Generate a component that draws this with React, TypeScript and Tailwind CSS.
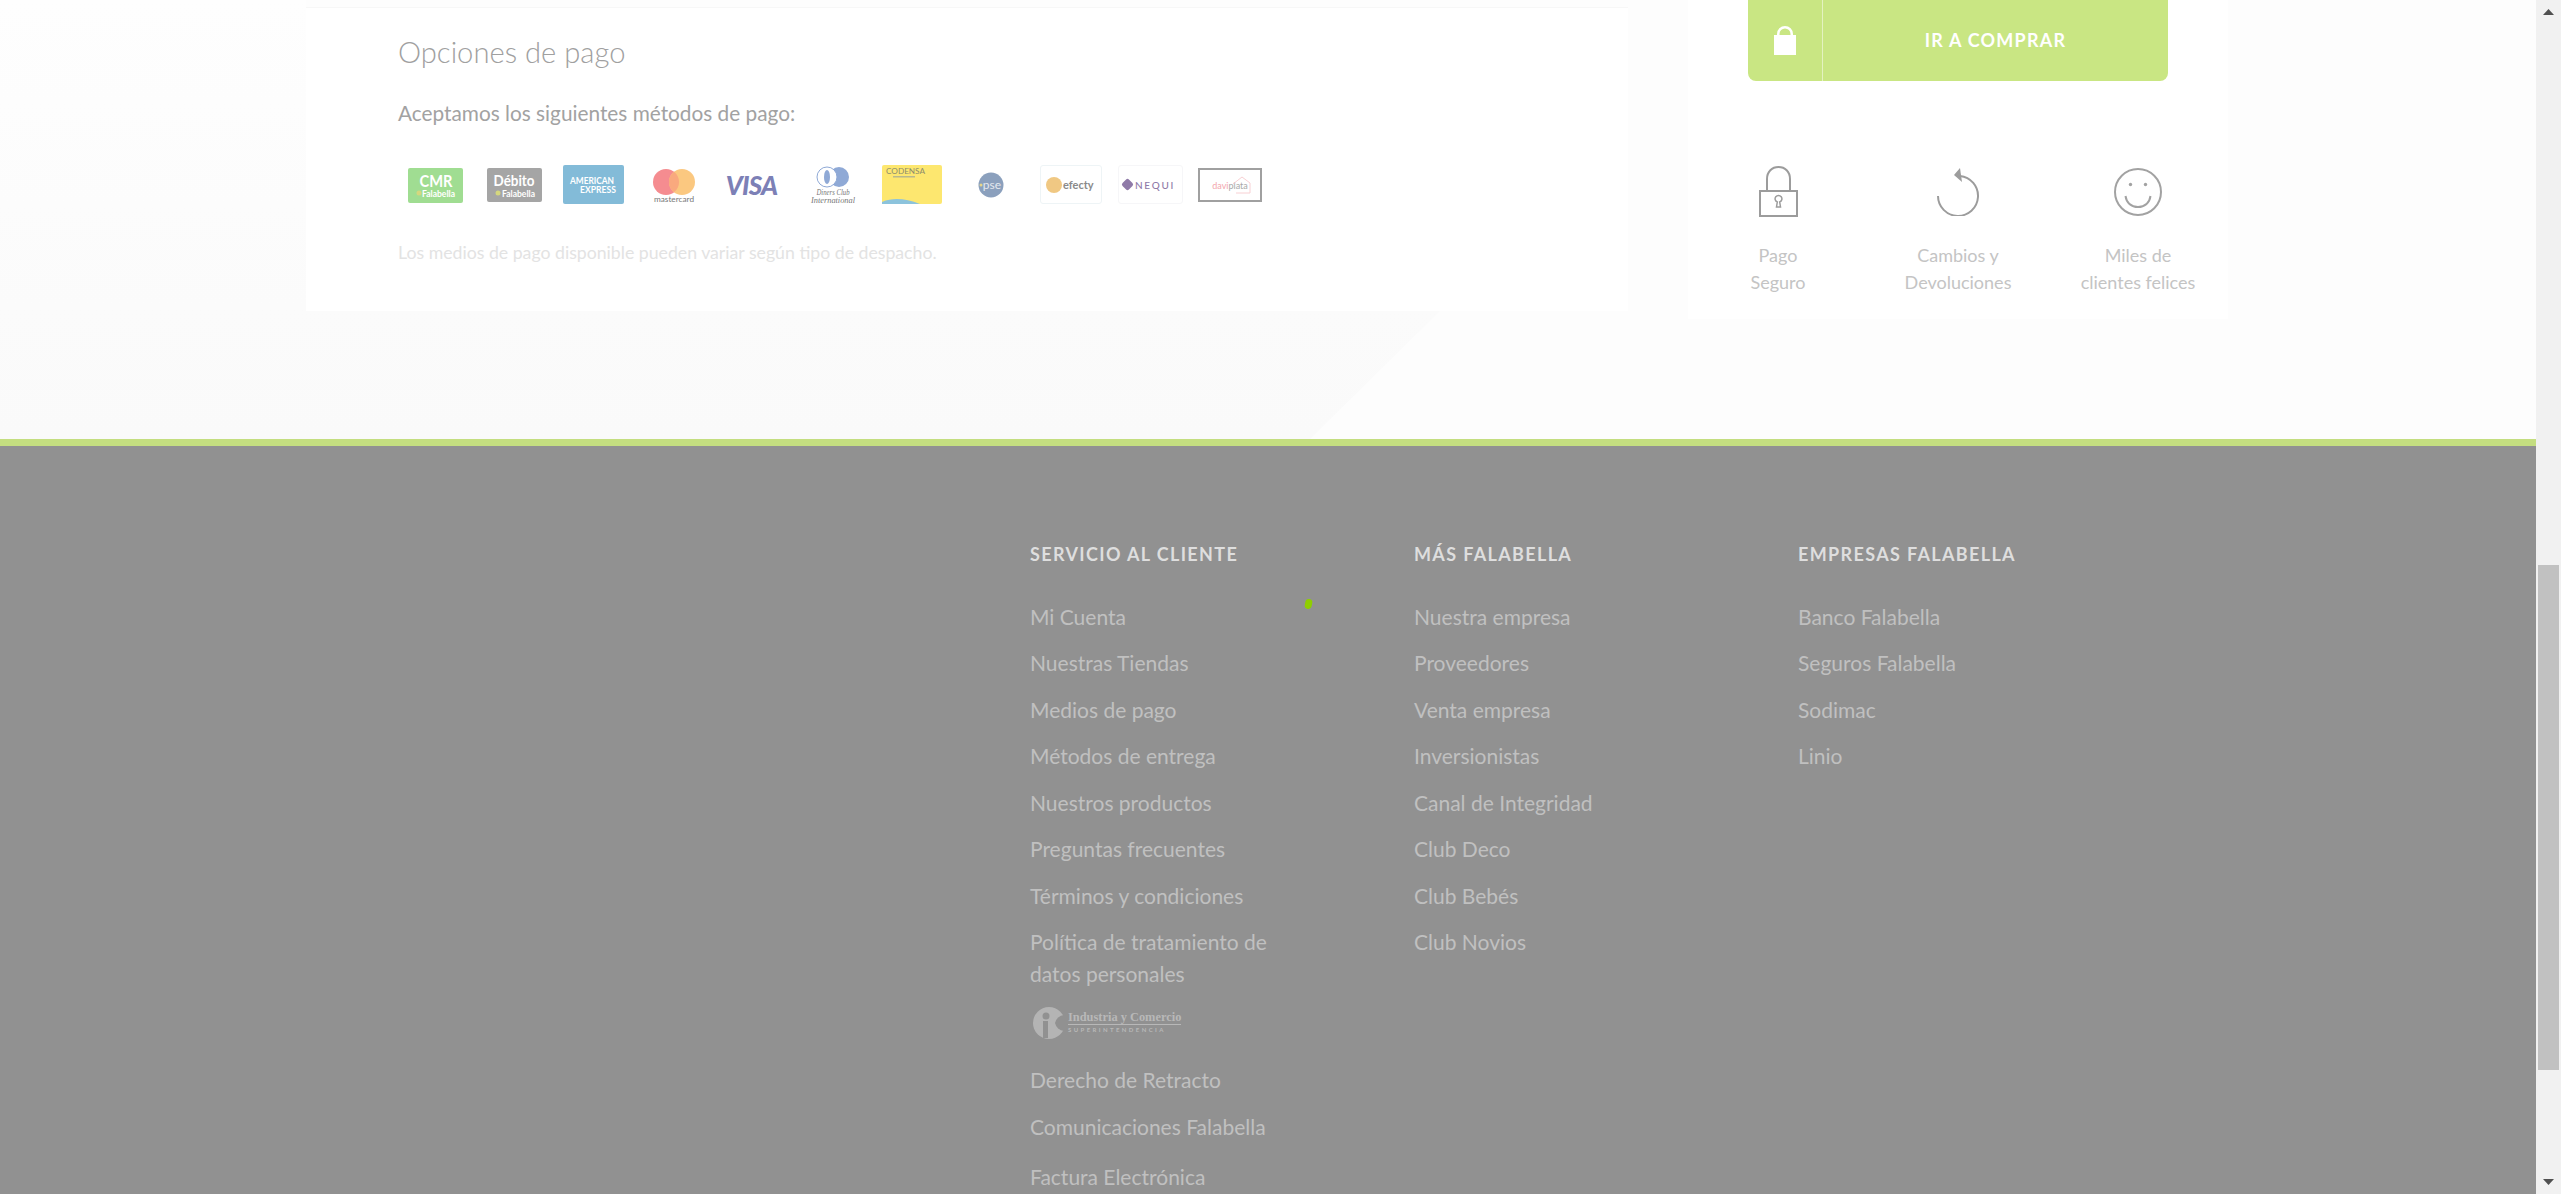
import React from 'react';

const servicio = ['Mi Cuenta', 'Nuestras Tiendas', 'Medios de pago', 'Métodos de entrega', 'Nuestros productos', 'Preguntas frecuentes', 'Términos y condiciones'];
const mas = ['Nuestra empresa', 'Proveedores', 'Venta empresa', 'Inversionistas', 'Canal de Integridad', 'Club Deco', 'Club Bebés', 'Club Novios'];
const empresas = ['Banco Falabella', 'Seguros Falabella', 'Sodimac', 'Linio'];

const linkClass = 'block text-[21px] leading-[32px] text-[#c0c0c0]';
const headClass = 'text-[18px] leading-[28px] font-bold tracking-[1.35px] text-[#dedede] mb-[32.5px]';

const FooterList = ({ title, links }: { title: string; links: string[] }) => (
  <div className="w-[384px]">
    <h4 className={headClass}>{title}</h4>
    <ul>
      {links.map((l) => (
        <li key={l} className={`${linkClass} mb-[14.5px]`}>{l}</li>
      ))}
    </ul>
  </div>
);

const Trust = ({ icon, lines, width }: { icon: React.ReactNode; lines: string[]; width: string }) => (
  <div className={`flex flex-col items-center ${width}`}>
    <div className="h-[51px] flex items-center justify-center">{icon}</div>
    <p className="mt-[24.5px] text-center text-[18px] leading-[27px] text-[#c4c4c4] whitespace-nowrap">
      {lines[0]}
      <br />
      {lines[1]}
    </p>
  </div>
);

const LockIcon = () => (
  <svg width="39" height="51" viewBox="0 0 39 51" fill="none" stroke="#9c9c9c" strokeWidth="2">
    <rect x="1" y="25" width="37" height="25" />
    <path d="M8 25V13C8 5.5 13 1 19.5 1S31 5.5 31 13v12" />
    <path d="M17.5 41h4l-.8-5a3.4 3.4 0 1 0-2.4 0z" strokeWidth="1.5" />
  </svg>
);

const ReturnIcon = () => (
  <svg width="42" height="48" viewBox="0 0 42 48" fill="none" stroke="#9c9c9c" strokeWidth="2">
    <path d="M23 8A20 20 0 1 1 1 28" />
    <path d="M23 0L17 7l8 7z" fill="#9c9c9c" stroke="none" />
  </svg>
);

const SmileIcon = () => (
  <svg width="48" height="48" viewBox="0 0 48 48" fill="none" stroke="#a2a2a2" strokeWidth="2">
    <circle cx="24" cy="24" r="23" />
    <circle cx="16.5" cy="16.5" r="1.7" fill="#a2a2a2" stroke="none" />
    <circle cx="31.5" cy="16.5" r="1.7" fill="#a2a2a2" stroke="none" />
    <path d="M11.500 28c1 7 6 11 12.500 11s11.500-4 12.500-11" />
  </svg>
);

const CmrLogo = () => (
  <svg width="55" height="35" viewBox="0 0 55 35" className="ml-[102px] mt-[3px]">
    <rect width="55" height="35" rx="2" fill="#a0dd92" />
    <text x="28" y="19" textAnchor="middle" fontSize="17" fontWeight="700" fill="#fff" textLength="33" lengthAdjust="spacingAndGlyphs">CMR</text>
    <circle cx="11" cy="25" r="2.500" fill="#d5d77e" />
    <text x="14" y="29" fontSize="10" fontWeight="700" fill="#fff" textLength="33" lengthAdjust="spacingAndGlyphs">Falabella</text>
  </svg>
);

const DebitoLogo = () => (
  <svg width="55" height="34" viewBox="0 0 55 34" className="ml-[24px] mt-[3px]">
    <rect width="55" height="34" rx="2" fill="#a5a5a5" />
    <text x="27" y="18" textAnchor="middle" fontSize="15" fontWeight="700" fill="#fff" textLength="41" lengthAdjust="spacingAndGlyphs">Débito</text>
    <circle cx="11" cy="25" r="2.500" fill="#d5d77e" />
    <text x="15" y="29" fontSize="10" fontWeight="700" fill="#fff" textLength="33" lengthAdjust="spacingAndGlyphs">Falabella</text>
  </svg>
);

const AmexLogo = () => (
  <svg width="61" height="39" viewBox="0 0 61 39" className="ml-[21px]">
    <rect width="61" height="39" rx="2" fill="#83bbd8" />
    <text x="7" y="19" fontSize="9.500" fontWeight="700" fill="#fff" textLength="44" lengthAdjust="spacingAndGlyphs">AMERICAN</text>
    <text x="17" y="28" fontSize="9.500" fontWeight="700" fill="#fff" textLength="36" lengthAdjust="spacingAndGlyphs">EXPRESS</text>
  </svg>
);

const MastercardLogo = () => (
  <svg width="56" height="39" viewBox="0 0 56 39" className="ml-[20px]">
    <circle cx="22" cy="17" r="13" fill="#f58c90" />
    <circle cx="38" cy="17" r="13" fill="#fbc880" />
    <path d="M30 6.700a13 13 0 0 1 0 20.600a13 13 0 0 1 0-20.600z" fill="#f9a97e" />
    <text x="30" y="37" textAnchor="middle" fontSize="8" fill="#777" textLength="40" lengthAdjust="spacingAndGlyphs">mastercard</text>
  </svg>
);

const VisaLogo = () => (
  <div className="ml-[24px] w-[55px] h-[39px] flex items-center justify-center">
    <span className="text-[26px] leading-none font-black italic text-[#7c80b6] tracking-[-0.8px]">VISA</span>
  </div>
);

const DinersLogo = () => (
  <svg width="46" height="39" viewBox="0 0 46 39" className="ml-[31px]">
    <circle cx="29" cy="12" r="10" fill="#8fa9d6" />
    <circle cx="17" cy="12" r="10" fill="#fff" stroke="#8fa9d6" strokeWidth="1" />
    <ellipse cx="17" cy="12" rx="3" ry="7" fill="#8fa9d6" />
    <text x="23" y="30" textAnchor="middle" fontFamily="'Liberation Serif', serif" fontStyle="italic" fontSize="8" fill="#777" textLength="33" lengthAdjust="spacingAndGlyphs">Diners Club</text>
    <text x="23" y="37.500" textAnchor="middle" fontFamily="'Liberation Serif', serif" fontStyle="italic" fontSize="8" fill="#777" textLength="44" lengthAdjust="spacingAndGlyphs">International</text>
  </svg>
);

const CodensaLogo = () => (
  <svg width="60" height="39" viewBox="0 0 60 39" className="ml-[26px]">
    <rect width="60" height="39" rx="2" fill="#fde76f" />
    <path d="M0 37c12-5 24-3 38 2H0z" fill="#8cc3dc" />
    <text x="4" y="9" fontSize="8" fill="#8c8c6c" textLength="39" lengthAdjust="spacingAndGlyphs">CODENSA</text>
    <rect x="11" y="11" width="22" height="1.500" fill="#b8b88c" />
  </svg>
);

const PseLogo = () => (
  <svg width="26" height="26" viewBox="0 0 26 26" className="ml-[36px] mt-[7px]">
    <circle cx="13" cy="13" r="12.500" fill="#8ba0bd" />
    <circle cx="3" cy="13" r="1.500" fill="#e6d58a" />
    <text x="14" y="17" textAnchor="middle" fontSize="12" fill="#e4e8ef">pse</text>
  </svg>
);

const EfectyLogo = () => (
  <div className="ml-[36px] w-[62px] h-[39px] rounded-[3px] border border-[#eef4f6] flex items-center pl-[5px] gap-[1px]">
    <div className="w-[16px] h-[16px] rounded-full bg-[#f0c883] shrink-0" />
    <span className="text-[11px] font-bold text-[#8a8a8a] leading-none">efecty</span>
  </div>
);

const NequiLogo = () => (
  <div className="ml-[16px] w-[65px] h-[39px] rounded-[3px] border border-[#f6f6f8] flex items-center pl-[4px] gap-[3px]">
    <div className="w-[9px] h-[9px] rotate-45 rounded-[2px] bg-[#8f7aa8] shrink-0" />
    <span className="text-[10px] font-medium tracking-[1.7px] text-[#8f7aa8] leading-none">NEQUI</span>
  </div>
);

const DaviplataLogo = () => (
  <div className="relative ml-[15px] mt-[3px] w-[64px] h-[34px] border-2 border-[#a0a0a0] bg-white flex items-center justify-center">
    <svg className="absolute left-[32px] top-[6px]" width="20" height="19" viewBox="0 0 20 19" fill="none" stroke="#f8d0d3" strokeWidth="1">
      <path d="M1 8L10 1l8 6v10H4" />
    </svg>
    <span className="text-[9px] leading-none text-[#f3a6ad]">davi</span>
    <span className="text-[9px] leading-none text-[#a8a8a8]">plata</span>
  </div>
);

const SicLogo = () => (
  <div className="flex items-center mb-[25px] ml-[3px] h-[32px]">
    <svg width="31" height="32" viewBox="0 0 31 32">
      <circle cx="16" cy="16" r="16" fill="#b4b4b4" />
      <circle cx="13" cy="9" r="3.500" fill="#919191" />
      <rect x="10" y="14" width="5" height="17" fill="#919191" />
      <path d="M31 8a10 10 0 0 0-9 8a10 10 0 0 0 9 8z" fill="#919191" />
    </svg>
    <div className="ml-[4px] w-[113px] flex flex-col">
      <span className="text-[12.400px] leading-[13px] font-bold text-[#b8b8b8] whitespace-nowrap" style={{ fontFamily: "'Liberation Serif', serif" }}>Industria y Comercio</span>
      <span className="border-t border-[#b8b8b8] text-[6px] leading-[9px] font-bold tracking-[2.4px] text-[#b8b8b8] whitespace-nowrap">SUPERINTENDENCIA</span>
    </div>
  </div>
);

export default function App() {
  return (
    <div className="flex h-[1194px] overflow-hidden bg-[#fdfdfd]" style={{ fontFamily: "Lato, 'Open Sans', sans-serif" }}>
      <div className="w-[2536px] shrink-0 flex flex-col">
        {/* upper area with payment card */}
        <section className="relative h-[439px] shrink-0 flex items-start">
          <svg className="absolute left-0 top-0" width="2536" height="439" viewBox="0 0 2536 439">
            <defs>
              <linearGradient id="fade" x1="0" y1="0" x2="0" y2="1">
                <stop offset="0" stopColor="#fefefe" />
                <stop offset="0.7" stopColor="#fbfbfb" />
                <stop offset="1" stopColor="#fafafa" />
              </linearGradient>
            </defs>
            <path d="M0 0H306V311H1440L1310 439H0z" fill="url(#fade)" />
          </svg>
          <div className="relative ml-[306px] mt-[7px] w-[1322px] h-[304px] bg-white border-t border-[#f7f7f7]">
            <h3 className="ml-[92px] mt-[23px] text-[29.200px] leading-[42px] font-light text-[#a0a0a0]">Opciones de pago</h3>
            <p className="ml-[92px] mt-[25px] text-[20.8px] leading-[30px] text-[#a2a2a2]">Aceptamos los siguientes métodos de pago:</p>
            <div className="flex items-start mt-[37px] h-[39px]">
              <CmrLogo />
              <DebitoLogo />
              <AmexLogo />
              <MastercardLogo />
              <VisaLogo />
              <DinersLogo />
              <CodensaLogo />
              <PseLogo />
              <EfectyLogo />
              <NequiLogo />
              <DaviplataLogo />
            </div>
            <p className="ml-[92px] mt-[36px] text-[17.700px] leading-[26px] text-[#e3e3e3]">Los medios de pago disponible pueden variar según tipo de despacho.</p>
          </div>
          <div className="relative ml-[60px] w-[540px] h-[319px] bg-white">
            <button className="ml-[60px] w-[420px] h-[81px] rounded-b-[8px] bg-[#c9e683] flex items-stretch">
              <span className="w-[75px] border-r border-[#e4f2c0] flex items-center justify-center">
                <svg width="22" height="29" viewBox="0 0 22 29" fill="#fff">
                  <path d="M0 9h22v20H0z" />
                  <path d="M3 10V8a8 8 0 0 1 16 0v2h-2.500V8a5.500 5.500 0 0 0-11 0v2z" />
                </svg>
              </span>
              <span className="flex-1 flex items-center justify-center text-[18px] font-bold tracking-[1.2px] text-white pb-[1px]">IR A COMPRAR</span>
            </button>
            <div className="flex mt-[85px]">
              <Trust icon={<LockIcon />} lines={['Pago', 'Seguro']} width="w-[180px]" />
              <Trust icon={<ReturnIcon />} lines={['Cambios y', 'Devoluciones']} width="w-[180px]" />
              <Trust icon={<SmileIcon />} lines={['Miles de', 'clientes felices']} width="w-[180px]" />
            </div>
          </div>
        </section>

        <div className="h-[7px] shrink-0 bg-[#c4de80]" />

        {/* footer */}
        <footer className="relative flex-1 bg-[#919191] overflow-hidden pl-[1030px] pt-[94px] flex items-start">
          <div className="w-[384px]">
            <h4 className={headClass}>SERVICIO AL CLIENTE</h4>
            <ul>
              {servicio.map((l) => (
                <li key={l} className={`${linkClass} mb-[14.5px]`}>{l}</li>
              ))}
              <li className={`${linkClass} w-[270px] mb-[16.5px]`}>Política de tratamiento de datos personales</li>
              <li><SicLogo /></li>
              <li className={`${linkClass} mb-[15.5px]`}>Derecho de Retracto</li>
              <li className={`${linkClass} mb-[18px]`}>Comunicaciones Falabella</li>
              <li className={linkClass}>Factura Electrónica</li>
            </ul>
          </div>
          <FooterList title="MÁS FALABELLA" links={mas} />
          <FooterList title="EMPRESAS FALABELLA" links={empresas} />
          {/* stray green cursor dot */}
          <div className="absolute left-[1305px] top-[153px] w-[7px] h-[10px] rounded-full bg-[#8fce00] rotate-12" />
        </footer>
      </div>

      {/* scrollbar */}
      <div className="w-[25px] shrink-0 bg-[#f1f1f1] flex flex-col items-center relative">
        <svg className="mt-[9px]" width="11" height="6" viewBox="0 0 11 6"><path d="M5.500 0L11 6H0z" fill="#505050" /></svg>
        <div className="absolute left-[2px] top-[565px] w-[21px] h-[505px] bg-[#c1c1c1]" />
        <svg className="mt-auto mb-[9px]" width="11" height="6" viewBox="0 0 11 6"><path d="M0 0h11L5.500 6z" fill="#505050" /></svg>
      </div>
    </div>
  );
}
